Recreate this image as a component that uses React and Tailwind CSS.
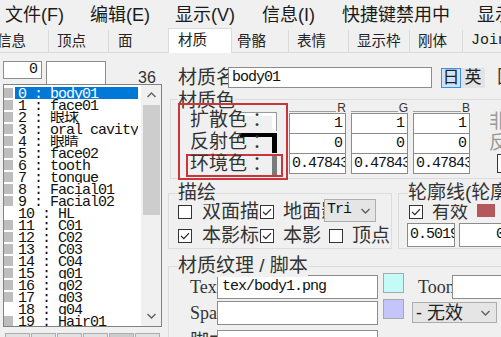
import React from 'react'

const SANS = "font-['Liberation_Sans','Noto_Sans_CJK_SC',sans-serif]"
const MONO = "font-['Liberation_Mono','Noto_Sans_CJK_SC',monospace]"
const SERIF = "font-['Liberation_Serif','Noto_Sans_CJK_SC',serif]"

const MATERIALS = [
  ['0', 'body01', true],
  ['1', 'face01', true],
  ['2', '眼球', true],
  ['3', 'oral cavity', true],
  ['4', '眼睛', true],
  ['5', 'face02', true],
  ['6', 'tooth', true],
  ['7', 'tongue', true],
  ['8', 'Facial01', true],
  ['9', 'Facial02', true],
  ['10', 'HL', false],
  ['11', 'C01', true],
  ['12', 'C02', true],
  ['13', 'C03', true],
  ['14', 'C04', true],
  ['15', 'g01', true],
  ['16', 'g02', true],
  ['17', 'g03', true],
  ['18', 'g04', false],
  ['19', 'Hair01', true],
]

function Chevron({ up = false }) {
  return (
    <svg width="9" height="6" viewBox="0 0 9 6">
      <path d={up ? 'M0.5 5 L4.5 1 L8.5 5' : 'M0.5 1 L4.5 5 L8.5 1'} stroke="#606060" strokeWidth="1.4" fill="none" />
    </svg>
  )
}

function Check({ checked }) {
  return (
    <div className="w-[14px] h-[14px] shrink-0 border border-[#333] bg-white flex items-center justify-center">
      {checked && (
        <svg width="10" height="8" viewBox="0 0 10 8">
          <path d="M1 3.8 L3.8 6.6 L9 1.2" stroke="#222" strokeWidth="1.2" fill="none" />
        </svg>
      )}
    </div>
  )
}

function Field({ className = '', children }) {
  return (
    <div className={`bg-white border border-[#8c8c8c] overflow-hidden whitespace-nowrap ${MONO} text-[15px] tracking-[-1px] text-[#111] ${className}`}>
      {children}
    </div>
  )
}

function ColorColumn({ letter, values }) {
  return (
    <div className="w-[57px] shrink-0 pt-[3px]">
      <div className="h-[10px] flex items-end">
        <div className="flex-1 border-b border-[#a0a0a0] mb-[1px]" />
        <span className={`${SANS} text-[12px] leading-[10px] text-[#333] pl-px`}>{letter}</span>
      </div>
      {values.map((v, i) => (
        <Field
          key={i}
          className={`h-[21px] leading-[19px] ${i > 0 ? '-mt-px' : ''} ${v.length > 3 ? 'pl-[2px] text-left' : 'pr-[3px] text-right'}`}
        >
          {v}
        </Field>
      ))}
    </div>
  )
}

// only the strips the labels leave uncovered are drawn
function Swatch({ kind }) {
  if (kind === 'white') {
    return (
      <div className="ml-[-32px] mt-[3px] w-[37px] h-[19px] border-t border-r border-[#9a9a9a]">
        <div className="w-full h-full border-t-[3px] border-r-[4px] border-white" />
      </div>
    )
  }
  if (kind === 'black') {
    return <div className="ml-[-32px] mt-[2px] w-[37px] h-[20px] border-t-[4px] border-r-[5px] border-black" />
  }
  return <div className="ml-[-32px] mt-[1px] w-[37px] h-[22px] border-r-[5px] border-[#7a7a7a]" />
}

export default function App() {
  return (
    <div className={`relative w-[501px] h-[337px] overflow-hidden bg-[#f0f0f0] ${SANS} text-[#222]`}>
      {/* menu bar */}
      <div className="h-[30px] flex items-center pl-[5px] text-[18px] text-[#1a1a1a] whitespace-nowrap">
        <span className="w-[85px] shrink-0">文件(F)</span>
        <span className="w-[85px] shrink-0">编辑(E)</span>
        <span className="w-[87px] shrink-0">显示(V)</span>
        <span className="w-[80px] shrink-0">信息(I)</span>
        <span className="w-[135px] shrink-0">快捷键禁用中</span>
        <span className="shrink-0">显示</span>
      </div>

      {/* tabs */}
      <div className="flex h-[23px] border-b border-[#dadada] text-[14.5px] leading-[20px] whitespace-nowrap">
        <div className="w-[49px] shrink-0 border-r border-[#dadada] flex items-center overflow-hidden">
          <span className="-ml-[3px]">信息</span>
        </div>
        <div className="w-[60px] shrink-0 border-r border-[#dadada] flex items-center pl-[8px]">顶点</div>
        <div className="w-[59px] shrink-0 flex items-center pl-[9px]">面</div>
        <div className="relative z-10 -mt-[2px] w-[64px] h-[25px] shrink-0 bg-white border border-b-0 border-[#dadada] pl-[9px] pt-px">材质</div>
        <div className="w-[57px] shrink-0 border-r border-[#dadada] flex items-center pl-[5px]">骨骼</div>
        <div className="w-[60px] shrink-0 border-r border-[#dadada] flex items-center pl-[8px]">表情</div>
        <div className="w-[61px] shrink-0 border-r border-[#dadada] flex items-center pl-[8px]">显示枠</div>
        <div className="w-[53px] shrink-0 border-r border-[#dadada] flex items-center pl-[8px]">刚体</div>
        <div className={`shrink-0 flex items-center pl-[8px] ${MONO} text-[15px]`}>Joint</div>
      </div>

      <div className="flex h-[284px]">
        {/* left: material list */}
        <div className="w-[165px] shrink-0 pt-[8px]">
          <div className="flex items-start">
            <Field className="ml-[3px] w-[39px] h-[18px] leading-[16px] pr-[3px] text-right text-[13px] tracking-normal">0</Field>
            <div className="ml-[4px] w-[60px] h-[26px] border border-[#8c8c8c] bg-white" />
            <span className="ml-[32px] mt-[7px] text-[16px] leading-[20px] text-[#333]">36</span>
          </div>
          <div className="relative -mt-[4px] ml-[3px] w-[159px] h-[243px] border border-[#828282] bg-white flex overflow-hidden">
            <div className={`w-[137px] shrink-0 pt-[2px] ${MONO} text-[15px] tracking-[-1px]`}>
              {MATERIALS.map(([idx, name, mark], i) => (
                <div key={idx} className="h-[12px] flex overflow-hidden">
                  <div className={`w-[9px] h-[10px] mt-[1px] shrink-0 ${mark ? 'bg-[#bdbdbd]' : ''}`} />
                  <div
                    className={`ml-[2px] w-[123px] h-[12px] pl-[3px] pt-px leading-[14px] whitespace-nowrap overflow-hidden ${
                      i === 0 ? 'bg-[#0078d7] text-white' : 'text-[#111]'
                    }`}
                  >
                    {idx} : {name}
                  </div>
                </div>
              ))}
            </div>
            <div className="w-[20px] shrink-0 bg-[#f0f0f0] flex flex-col items-center">
              <div className="h-[20px] flex items-center justify-center">
                <Chevron up />
              </div>
              <div className="w-[17px] h-[110px] bg-[#cdcdcd]" />
              <div className="flex-1" />
              <div className="h-[20px] flex items-center justify-center">
                <Chevron />
              </div>
            </div>
          </div>
          <div className="flex gap-[1px] ml-[5px] mt-[6px]">
            {[0, 1, 2, 3, 4, 5].map((n) => (
              <div key={n} className={`w-[25px] h-[20px] border border-[#adadad] ${n === 4 ? 'bg-[#cccccc]' : 'bg-[#e1e1e1]'}`} />
            ))}
          </div>
        </div>

        {/* right: material properties */}
        <div className="w-[336px] shrink-0 pt-[14px]">
          <div className="h-[21px] flex items-center whitespace-nowrap">
            <div className="ml-[13px] w-[50px] shrink-0 overflow-hidden text-[19px] leading-[21px] text-[#333]">材质名</div>
            <Field className="w-[204px] shrink-0 h-[21px] leading-[19px] pl-[3px]">body01</Field>
            <div className="ml-[9px] w-[20px] h-[20px] shrink-0 bg-[#cce4f7] border border-[#3d8ee0] flex items-center justify-center text-[17px] leading-none">日</div>
            <div className="w-[24px] h-[20px] shrink-0 bg-[#e3e3e3] flex items-center justify-center text-[17px] leading-none">英</div>
            <div className="ml-[12px] shrink-0 text-[18px] text-[#333]">固有</div>
          </div>

          {/* material colour */}
          <div className="relative mt-[11px] ml-[5px] w-[340px] h-[80px] border border-[#dcdcdc] flex">
            <div className="absolute left-[7px] top-[-10px] bg-[#f0f0f0] text-[19px] leading-[22px] text-[#333]">材质色</div>
            <div className="w-[118px] shrink-0 pt-[9px]">
              {[['扩散色 ：', 'white'], ['反射色 ：', 'black'], ['环境色 ：', 'gray']].map(([label, kind]) => (
                <div key={label} className="h-[22px] flex items-start pl-[19px]">
                  <div className="relative z-10 w-[82px] shrink-0 whitespace-nowrap text-[19px] leading-[22px] text-[#333]">{label}</div>
                  <Swatch kind={kind} />
                </div>
              ))}
            </div>
            <div className="flex gap-[5px]">
              <ColorColumn letter="R" values={['1', '0', '0.47843']} />
              <ColorColumn letter="G" values={['1', '0', '0.47843']} />
              <ColorColumn letter="B" values={['1', '0', '0.47843']} />
            </div>
            <div className="ml-[19px] pt-[11px] text-[19px] leading-[21px] text-[#9a9a9a] whitespace-nowrap">
              <div>非</div>
              <div>反</div>
              <div className="ml-[8px] mt-px w-[14px] h-[19px] border border-[#333] bg-white" />
            </div>
          </div>

          {/* draw + outline */}
          <div className="flex mt-[14px] ml-[3px]">
            <div className="relative w-[224px] h-[56px] shrink-0 border border-[#dcdcdc] text-[19px] text-[#333] whitespace-nowrap">
              <div className="absolute left-[9px] top-[-12px] bg-[#f0f0f0] leading-[22px]">描绘</div>
              <div className="mt-[7px] h-[22px] flex items-center pl-[9px]">
                <Check checked={false} />
                <div className="ml-[10px] w-[58px] shrink-0 overflow-hidden leading-[22px]">双面描画</div>
                <Check checked />
                <div className="ml-[9px] w-[41px] shrink-0 overflow-hidden leading-[22px]">地面影</div>
                <div className={`w-[52px] h-[23px] -mt-[3px] shrink-0 bg-[#e5e5e5] border border-[#adadad] flex items-center justify-between pl-[2px] pr-[5px] ${MONO} text-[15px] tracking-[-1px] text-[#111]`}>
                  <span>Tri</span>
                  <Chevron />
                </div>
              </div>
              <div className="mt-[3px] h-[20px] flex items-center pl-[9px]">
                <Check checked />
                <div className="ml-[10px] w-[58px] shrink-0 overflow-hidden leading-[22px]">本影标记</div>
                <Check checked />
                <div className="ml-[9px] w-[46px] shrink-0 overflow-hidden leading-[22px]">本影</div>
                <Check checked={false} />
                <div className="ml-[9px] leading-[22px]">顶点</div>
              </div>
            </div>

            <div className="relative ml-[6px] w-[120px] h-[56px] shrink-0 border border-[#dcdcdc] text-[19px] text-[#333] whitespace-nowrap">
              <div className="absolute left-[9px] top-[-12px] bg-[#f0f0f0] leading-[22px]">轮廓线(轮廓线)</div>
              <div className="mt-[7px] h-[22px] flex items-center pl-[10px]">
                <Check checked />
                <div className="ml-[9px] leading-[22px] text-[18px]">有效</div>
                <div className="ml-[9px] self-start -mt-[3px] w-[18px] h-[19px] bg-[#b4585d] border-t-2 border-[#8e3c40]" />
              </div>
              <div className="h-[24px] flex pl-[8px] gap-[4px]">
                <Field className="w-[48px] h-[24px] leading-[22px] pl-[2px]">0.50196</Field>
                <Field className="w-[50px] shrink-0 h-[24px] leading-[22px] pr-[4px] text-right">0</Field>
              </div>
            </div>
          </div>

          {/* texture / script */}
          <div className="relative mt-[17px] ml-[3px] w-[340px] h-[100px] border border-[#dcdcdc] text-[#333] whitespace-nowrap">
            <div className="absolute left-[9px] top-[-12px] bg-[#f0f0f0] text-[19px] leading-[22px]">材质纹理 / 脚本</div>
            <div className="mt-[8px] h-[24px] flex items-start pl-[21px]">
              <div className={`w-[27px] shrink-0 overflow-hidden ${SERIF} text-[18px] leading-[24px]`}>Texture</div>
              <Field className="w-[161px] shrink-0 h-[24px] leading-[22px] pl-[4px]">tex/body1.png</Field>
              <div className="ml-[5px] -mt-[2px] w-[21px] h-[20px] shrink-0 bg-[#c4fbf7] border border-[#a8a8a8]" />
              <div className={`ml-[14px] w-[34px] shrink-0 overflow-hidden ${SERIF} text-[18px] leading-[24px]`}>Toon</div>
              <Field className="w-[60px] shrink-0 h-[24px]" />
            </div>
            <div className="mt-[2px] h-[24px] flex items-start pl-[21px]">
              <div className={`w-[27px] shrink-0 overflow-hidden ${SERIF} text-[18px] leading-[24px]`}>Spa</div>
              <Field className="w-[161px] shrink-0 h-[24px]" />
              <div className="ml-[5px] -mt-[2px] w-[21px] h-[20px] shrink-0 bg-[#c5c5fb] border border-[#a8a8a8]" />
              <div className="ml-[8px] mt-px w-[85px] h-[21px] shrink-0 bg-[#e5e5e5] border border-[#adadad] flex items-center justify-between pl-[3px] pr-[6px] text-[18px] leading-none text-[#222]">
                <span>- 无效</span>
                <Chevron />
              </div>
            </div>
            <div className="mt-[5px] h-[24px] flex items-start pl-[21px]">
              <div className="w-[27px] shrink-0 overflow-hidden text-[19px] leading-[24px]">脚本</div>
              <Field className="w-[161px] shrink-0 h-[24px]" />
            </div>
          </div>
        </div>
      </div>

      {/* annotation boxes */}
      <div className="absolute left-[178px] top-[103px] w-[110px] h-[77px] border-2 border-[#c8353b] pointer-events-none" />
      <div className="absolute left-[186px] top-[154px] w-[97px] h-[23px] border-2 border-[#c8353b] pointer-events-none" />
    </div>
  )
}
